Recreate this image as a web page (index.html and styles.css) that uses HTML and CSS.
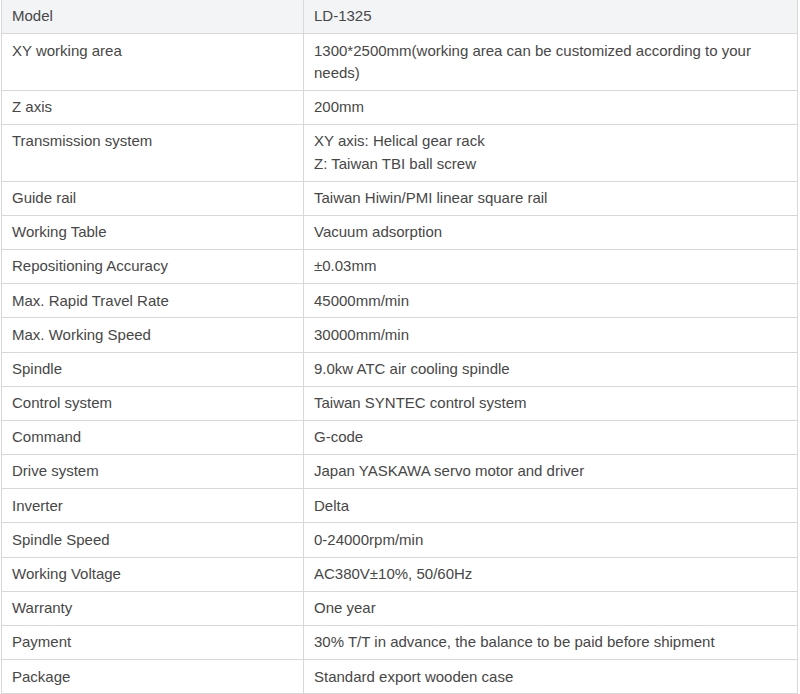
FILE: index.html
```html
<!DOCTYPE html>
<html lang="en">
<head>
<meta charset="utf-8">
<title>LD-1325 Specifications</title>
<link rel="stylesheet" href="styles.css">
</head>
<body>
<div class="wrap">
<table class="spec">
  <colgroup><col class="c-name"><col class="c-val"></colgroup>
  <tbody>
    <tr class="head"><td>Model</td><td>LD-1325</td></tr>
    <tr><td>XY working area</td><td>1300*2500mm(working area can be customized according to your needs)</td></tr>
    <tr><td>Z axis</td><td>200mm</td></tr>
    <tr><td>Transmission system</td><td>XY axis: Helical gear rack<br>Z: Taiwan TBI ball screw</td></tr>
    <tr><td>Guide rail</td><td>Taiwan Hiwin/PMI linear square rail</td></tr>
    <tr><td>Working Table</td><td>Vacuum adsorption</td></tr>
    <tr><td>Repositioning Accuracy</td><td>±0.03mm</td></tr>
    <tr><td>Max. Rapid Travel Rate</td><td>45000mm/min</td></tr>
    <tr><td>Max. Working Speed</td><td>30000mm/min</td></tr>
    <tr><td>Spindle</td><td>9.0kw ATC air cooling spindle</td></tr>
    <tr><td>Control system</td><td>Taiwan SYNTEC control system</td></tr>
    <tr><td>Command</td><td>G-code</td></tr>
    <tr><td>Drive system</td><td>Japan YASKAWA servo motor and driver</td></tr>
    <tr><td>Inverter</td><td>Delta</td></tr>
    <tr><td>Spindle Speed</td><td>0-24000rpm/min</td></tr>
    <tr><td>Working Voltage</td><td>AC380V±10%, 50/60Hz</td></tr>
    <tr><td>Warranty</td><td>One year</td></tr>
    <tr><td>Payment</td><td>30% T/T in advance, the balance to be paid before shipment</td></tr>
    <tr><td>Package</td><td>Standard export wooden case</td></tr>
  </tbody>
</table>
</div>
</body>
</html>
```

FILE: styles.css
```css
html, body {
  margin: 0;
  padding: 0;
  background: #ffffff;
}
.wrap {
  padding: 0 2px 0 1px;
}
.spec {
  width: 100%;
  border-collapse: collapse;
  table-layout: fixed;
  font-family: "Liberation Sans", Arial, sans-serif;
  font-size: 15px;
  line-height: 22.4px;
  color: #474747;
}
.c-name { width: 302px; }
.spec td {
  border: 1px solid #d8d8d8;
  padding: 5.4px 10px 5.4px 10px;
  vertical-align: top;
  text-align: left;
}
.spec tr:first-child td {
  border-top: none;
}
.spec tr.head td {
  background: #f3f4f6;
}
```
